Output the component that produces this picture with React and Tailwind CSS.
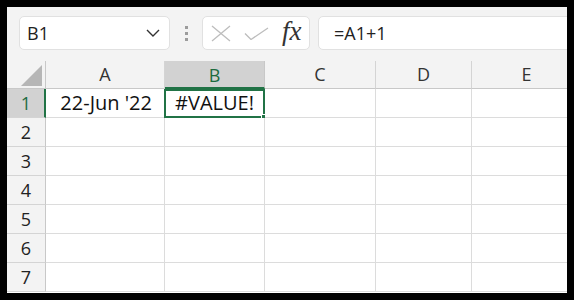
import React from "react";

const COLS = [
  { key: "A", w: "w-[119px]" },
  { key: "B", w: "w-[100px]" },
  { key: "C", w: "w-[111px]" },
  { key: "D", w: "w-[96px]" },
  { key: "E", w: "w-[110px]" },
];

const ROWS = [1, 2, 3, 4, 5, 6, 7];

function Toolbar() {
  return (
    <div className="flex h-[54px] shrink-0 items-start overflow-hidden bg-[#f3f3f3] pt-[9px] pl-[12px]">
      <div className="flex h-[34px] w-[151px] shrink-0 items-center justify-between rounded-[5px] border border-[#e1e1e1] bg-white pl-[7px] pr-[9px]">
        <span className="text-[18px] text-[#222]">B1</span>
        <svg width="14" height="8" viewBox="0 0 14 8" fill="none">
          <path d="M1 1l6 6 6-6" stroke="#333" strokeWidth="1.4" />
        </svg>
      </div>
      <div className="flex h-[34px] w-[32px] shrink-0 flex-col items-center justify-center gap-[3px]">
        <span className="h-[3px] w-[3px] bg-[#9c9c9c]" />
        <span className="h-[3px] w-[3px] bg-[#9c9c9c]" />
        <span className="h-[3px] w-[3px] bg-[#9c9c9c]" />
      </div>
      <div className="flex h-[34px] w-[108px] shrink-0 items-center rounded-[5px] border border-[#e1e1e1] bg-white">
        <svg className="ml-[8px]" width="20" height="17" viewBox="0 0 20 17" fill="none">
          <path d="M1 1l18 15M19 1L1 16" stroke="#bdbdbd" strokeWidth="1.3" />
        </svg>
        <svg className="ml-[13px]" width="25" height="13" viewBox="0 0 25 13" fill="none">
          <path d="M1 6.5l6 6L24 1" stroke="#bdbdbd" strokeWidth="1.3" />
        </svg>
        <span className="ml-[13px] pb-[3px] font-['Liberation_Serif',serif] text-[27px] italic leading-none text-[#333]">
          fx
        </span>
      </div>
      <div className="ml-[8px] flex h-[34px] w-[300px] shrink-0 items-center rounded-[5px] border border-[#e1e1e1] bg-white pl-[15px]">
        <span className="text-[18px] text-[#222]">=A1+1</span>
      </div>
    </div>
  );
}

function HeaderRow() {
  return (
    <div className="flex h-[28px] shrink-0">
      <div className="relative w-[39px] shrink-0 border-r border-b border-[#c8c8c8] bg-[#f3f3f3]">
        <svg className="absolute right-[3px] bottom-[2px]" width="21" height="21" viewBox="0 0 21 21">
          <path d="M21 0L21 21L0 21Z" fill="#b6b6b6" />
        </svg>
      </div>
      {COLS.map((c) => (
        <div
          key={c.key}
          className={`flex shrink-0 items-center justify-center border-r text-[18px] ${c.w} ${
            c.key === "B"
              ? "border-b-2 border-r-[#c8c8c8] border-b-[#217346] bg-[#d2d2d2] pt-[2px] text-[#1d6b3f]"
              : "border-b border-[#d4d4d4] border-b-[#c8c8c8] bg-[#f3f3f3] text-[#333]"
          }`}
        >
          {c.key}
        </div>
      ))}
    </div>
  );
}

function Row({ n }) {
  const selected = n === 1;
  return (
    <div className="flex h-[29px] shrink-0">
      <div
        className={`flex w-[39px] shrink-0 items-center justify-center border-b border-b-[#d4d4d4] text-[18px] ${
          selected
            ? "border-r-2 border-r-[#217346] bg-[#d2d2d2] pl-[1px] text-[#1d6b3f]"
            : "border-r border-r-[#c8c8c8] bg-[#f3f3f3] text-[#222]"
        }`}
      >
        {n}
      </div>
      {COLS.map((c) => (
        <div
          key={c.key}
          className={`relative flex shrink-0 items-center border-r border-b border-[#dcdcdc] bg-white text-[20px] text-[#111] ${c.w} ${
            c.key === "A" ? "justify-end pr-[12px]" : "justify-center"
          }`}
        >
          {n === 1 && c.key === "A" && "22-Jun '22"}
          {n === 1 && c.key === "B" && (
            <>
              #VALUE!
              <div className="absolute top-0 left-[-1px] right-[-1px] bottom-[-1px] border-2 border-[#217346]" />
              <div className="absolute right-[-4px] bottom-[-4px] h-[7px] w-[7px] border border-white bg-[#217346]" />
            </>
          )}
        </div>
      ))}
    </div>
  );
}

export default function App() {
  return (
    <div className="h-[300px] w-[574px] bg-black p-[7px] font-['Open_Sans','Noto_Sans',sans-serif]">
      <div className="flex h-[286px] flex-col overflow-hidden bg-white">
        <Toolbar />
        <HeaderRow />
        {ROWS.map((n) => (
          <Row key={n} n={n} />
        ))}
      </div>
    </div>
  );
}
